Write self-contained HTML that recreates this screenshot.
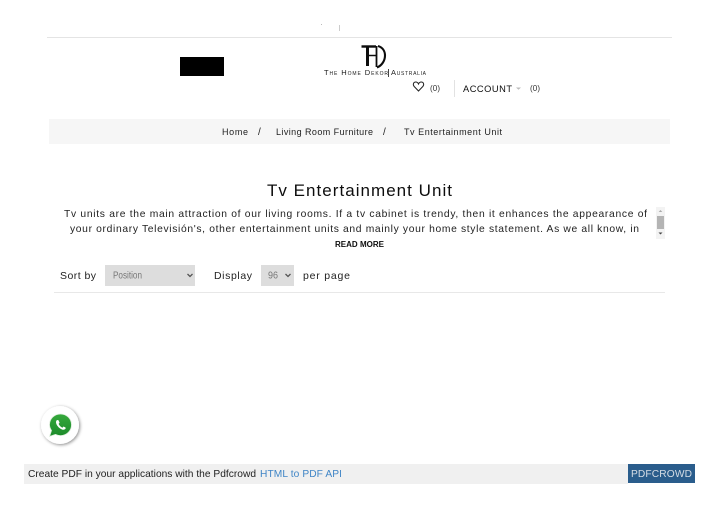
<!DOCTYPE html>
<html>
<head>
<meta charset="utf-8">
<style>
html,body{margin:0;padding:0;background:#fff;width:720px;height:509px;overflow:hidden}
svg{display:block}
text{font-family:"Liberation Sans",sans-serif}
</style>
</head>
<body>
<svg width="720" height="509" viewBox="0 0 720 509" xmlns="http://www.w3.org/2000/svg">
<defs>
<filter id="sh" x="-30%" y="-30%" width="160%" height="160%"><feDropShadow dx="1" dy="1" stdDeviation="1.500" flood-color="#000" flood-opacity=".45"/></filter>
<filter id="bl" x="0" y="0" width="720" height="509" filterUnits="userSpaceOnUse"><feGaussianBlur stdDeviation=".35"/></filter>
<linearGradient id="g" x1="0" y1="0" x2="0" y2="1"><stop offset="0" stop-color="#35a93c"/><stop offset="1" stop-color="#1c8a2a"/></linearGradient>
</defs>

<g filter="url(#bl)">
<!-- top -->
<rect x="321" y="24" width="1" height="1" fill="#bbb"/>
<rect x="339" y="25" width="1" height="6" fill="#ccc"/>
<rect x="47" y="37" width="625" height="1" fill="#e4e4e4"/>
<rect x="180" y="57" width="44" height="19" fill="#000"/>

<!-- logo -->
<g fill="none" stroke="#111">
<path d="M361.500 46.500H376" stroke-width="2.400"/>
<path d="M367.500 46V66" stroke-width="3"/>
<path d="M368 55.500H376" stroke-width="1.500"/>
<path d="M376.500 46V67" stroke-width="1.800"/>
<path d="M378 46C383 47.500 385 51.500 385 55.500C385 60.500 382 65.500 377 67.500" stroke-width="2.100"/>
</g>
<text x="324" y="75" font-size="7.500" textLength="64" lengthAdjust="spacing" fill="#222" style="font-variant:small-caps">The Home Dekor</text>
<rect x="388" y="69" width="1" height="8" fill="#444"/>
<text x="391" y="75" font-size="7.500" textLength="35" lengthAdjust="spacing" fill="#222" style="font-variant:small-caps">Australia</text>

<!-- header icons -->
<path d="M418.500 91L414.200 86.500C412.500 84.500 413.500 82 415.700 82C417 82 418 82.800 418.500 84C419 82.800 420 82 421.300 82C423.500 82 424.500 84.500 422.800 86.500Z" fill="none" stroke="#222" stroke-width="1"/>
<text x="430" y="91" font-size="8" textLength="10" lengthAdjust="spacing" fill="#333">(0)</text>
<rect x="454" y="80" width="1" height="17" fill="#e2e2e2"/>
<text x="463" y="92" font-size="9.300" textLength="49" lengthAdjust="spacing" fill="#111">ACCOUNT</text>
<path d="M516 87.500H521L518.500 89.800Z" fill="#bbb"/>
<text x="530" y="91" font-size="8" textLength="10" lengthAdjust="spacing" fill="#333">(0)</text>

<!-- breadcrumb -->
<rect x="49" y="119" width="621" height="25" fill="#f6f6f6"/>
<text x="222" y="135" font-size="9" textLength="26" lengthAdjust="spacing" fill="#222">Home</text>
<text x="258" y="135" font-size="10" fill="#222">/</text>
<text x="276" y="135" font-size="9" textLength="97" lengthAdjust="spacing" fill="#222">Living Room Furniture</text>
<text x="383" y="135" font-size="10" fill="#222">/</text>
<text x="404" y="135" font-size="9" textLength="98" lengthAdjust="spacing" fill="#222">Tv Entertainment Unit</text>

<!-- title -->
<text x="267" y="196" font-size="17" textLength="185" lengthAdjust="spacing" fill="#111">Tv Entertainment Unit</text>

<!-- description -->
<text x="64" y="217" font-size="10.300" textLength="583" lengthAdjust="spacing" fill="#222">Tv units are the main attraction of our living rooms. If a tv cabinet is trendy, then it enhances the appearance of</text>
<text x="70" y="232" font-size="10.300" textLength="569" lengthAdjust="spacing" fill="#222">your ordinary Televisión's, other entertainment units and mainly your home style statement. As we all know, in</text>
<text x="335" y="247" font-size="8" font-weight="700" textLength="49" lengthAdjust="spacing" fill="#111">READ MORE</text>

<!-- scrollbar -->
<rect x="656" y="207" width="9" height="32" fill="#f3f3f3"/>
<rect x="657" y="216" width="7" height="13" fill="#b4b4b4"/>
<path d="M658.700 212L660.500 210L662.300 212Z" fill="#aaa"/>
<path d="M658.500 232.500H662.500L660.500 234.500Z" fill="#444"/>

<!-- toolbar -->
<text x="60" y="279" font-size="10.500" textLength="36" lengthAdjust="spacing" fill="#222">Sort by</text>
<rect x="105" y="265" width="90" height="21" fill="#ddd"/>
<text x="113" y="278.500" font-size="9.800" textLength="29" lengthAdjust="spacingAndGlyphs" fill="#777">Position</text>
<path d="M187.500 274L190 276.500L192.500 274" fill="none" stroke="#555" stroke-width="1.300"/>
<text x="214" y="279" font-size="10.500" textLength="38" lengthAdjust="spacing" fill="#222">Display</text>
<rect x="261" y="265" width="33" height="21" fill="#ddd"/>
<text x="268" y="278.500" font-size="9.800" textLength="10" lengthAdjust="spacingAndGlyphs" fill="#777">96</text>
<path d="M285.500 274L288 276.500L290.500 274" fill="none" stroke="#555" stroke-width="1.300"/>
<text x="303" y="279" font-size="10.500" textLength="47" lengthAdjust="spacing" fill="#222">per page</text>
<rect x="54" y="292" width="611" height="1" fill="#e8e8e8"/>

<!-- whatsapp -->
<circle cx="60" cy="425" r="19" fill="#fff" filter="url(#sh)"/>
<path d="M49.500 436.500L51.500 430.500C50.300 428.700 49.500 426.800 49.500 424.800C49.500 418.800 54.300 414 60.500 414C66.700 414 71.500 418.800 71.500 424.800C71.500 430.800 66.700 435.600 60.500 435.600C58.700 435.600 56.900 435.200 55.400 434.400Z" fill="url(#g)" stroke="#dfeedd" stroke-width=".8"/>
<path d="M57 420C56 420.800 55.700 422.200 56.300 423.800C57.300 426.400 59.400 428.500 62 429.500C63.600 430.100 65 429.600 65.700 428.400L65.500 427.500L63.500 426.500L62.400 427.700C60.700 427 59.300 425.500 58.600 423.900L59.600 422.800L58.500 420.300Z" fill="#fff"/>

<!-- pdfcrowd bar -->
<rect x="24" y="464" width="604" height="20" fill="#f0f0f0"/>
<text x="28" y="477" font-size="10.200" textLength="228" lengthAdjust="spacing" fill="#222">Create PDF in your applications with the Pdfcrowd</text>
<text x="260" y="477" font-size="10.200" textLength="82" lengthAdjust="spacing" fill="#3f85c6">HTML to PDF API</text>
<rect x="628" y="464" width="67" height="19" fill="#2b5d8c"/>
<text x="631" y="477" font-size="10.200" textLength="61" lengthAdjust="spacing" fill="#d5dde5">PDFCROWD</text>
</g>
</svg>
</body>
</html>
